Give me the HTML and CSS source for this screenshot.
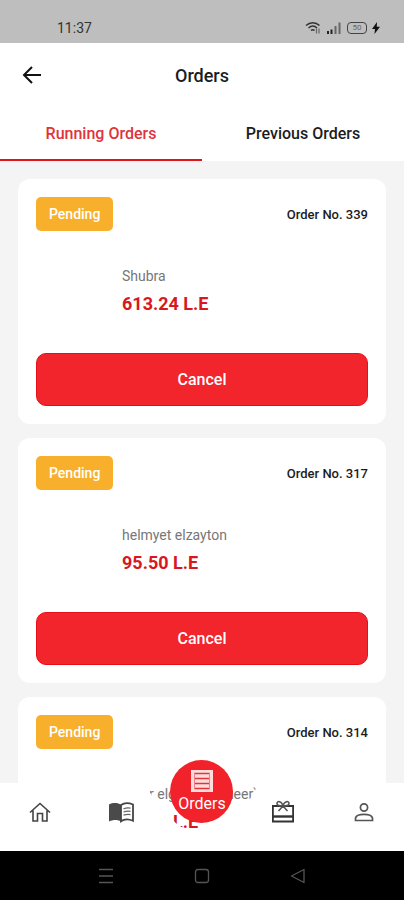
FILE: index.html
```html
<!DOCTYPE html>
<html lang="en">
  <head>
    <meta charset="UTF-8" />
    <meta name="viewport" content="width=device-width, initial-scale=1.0" />
    <title>Orders</title>
    <link rel="stylesheet" href="styles.css">
  </head>
  <body>
    <div class="status-bar">
      <span class="clock">11:37</span>
      <div class="status-icons">
        <svg width="16" height="14" viewBox="0 0 16 14" fill="none" stroke="#333" stroke-width="1.5">
          <path d="M1 4.5C5 .8 10.500 .8 14.500 4.500M3.500 7C6.200 4.600 9.500 4.600 12 7M6 9.500C7.200 8.400 8.500 8.400 9.500 9.500" />
          <path d="M11.500 7.500V12.500M14 7.500V12.500" stroke="#666" stroke-width="1.200" />
        </svg>
        <svg width="16" height="14" viewBox="0 0 16 14">
          <path d="M1 10h2v3H1zM4.500 8.500h2V13h-2z" fill="#222" />
          <path d="M8.500 5h2v8h-2zM12.500 1.500h2V13h-2z" fill="#666" />
        </svg>
        <span class="battery">50</span>
        <svg class="bolt" width="8" height="12" viewBox="0 0 8 12">
          <path d="M5 0L0 7h3L2.500 12L8 4.800H4.800z" fill="#111" />
        </svg>
      </div>
    </div>

    <header class="app-bar">
      <button class="back" type="button" aria-label="Back">
        <svg width="20" height="20" viewBox="0 0 20 20" fill="none" stroke="#111" stroke-width="2">
          <path d="M19 10H2.500M10 2L2 10l8 8" />
        </svg>
      </button>
      <h1>Orders</h1>
    </header>

    <div class="tabs" role="tablist">
      <button class="tab active" type="button" role="tab" aria-selected="true">Running Orders</button>
      <button class="tab" type="button" role="tab" aria-selected="false">Previous Orders</button>
    </div>

    <div class="content">
      <main class="orders">
        <article class="card">
          <div class="card-head">
            <span class="badge">Pending</span>
            <span class="order-no">Order No. 339</span>
          </div>
          <div class="card-body">
            <p class="place">Shubra</p>
            <p class="price">613.24 L.E</p>
          </div>
          <button class="cancel" type="button">Cancel</button>
        </article>

        <article class="card">
          <div class="card-head">
            <span class="badge">Pending</span>
            <span class="order-no">Order No. 317</span>
          </div>
          <div class="card-body">
            <p class="place">helmyet elzayton</p>
            <p class="price">95.50 L.E</p>
          </div>
          <button class="cancel" type="button">Cancel</button>
        </article>

        <article class="card">
          <div class="card-head">
            <span class="badge">Pending</span>
            <span class="order-no">Order No. 314</span>
          </div>
          <div class="card-body">
            <p class="place">Masr elgdeda (elheer)</p>
            <p class="price">76.50 L.E</p>
          </div>
        </article>
      </main>

      <nav class="bottom-nav">
        <!-- white bar with a notch for the round button -->
        <div class="nav-shape">
          <span></span>
          <svg width="120" height="68" viewBox="0 0 120 68">
            <path
              fill="#fff"
              d="M0 0C5 0 7 10 13 17C20 27 26 31 31 37C37 45 48 48 60 48C72 48 83 45 89 37C94 31 100 27 107 17C113 10 115 0 120 0V68H0z"
            />
          </svg>
          <span></span>
        </div>
        <a href="#home" aria-label="Home">
          <svg width="22" height="22" viewBox="0 0 22 22" fill="none" stroke="#444" stroke-width="1.600">
            <path d="M1 11.500L11 2.500l10 9M4 9.500V20h4.500v-7.500h5V20H18V9.500" />
          </svg>
        </a>
        <a href="#menu" aria-label="Menu">
          <svg width="26" height="22" viewBox="0 0 26 22">
            <path d="M1 3.500C5 1.500 10 1.500 13 4V20.500C10 18.500 5 18.500 1 20.500z" fill="#4a4a4a" />
            <path
              d="M13 4C16 1.800 21 1.800 25 3.500V19.800C21 18 16 18 13 20.300z"
              fill="none"
              stroke="#444"
              stroke-width="1.800"
            />
            <path d="M15.500 7.800q3.500-1.300 7-.6M15.500 11q3.500-1.300 7-.6M15.500 14.200q3.500-1.300 7-.6" fill="none" stroke="#666" stroke-width="1.300" />
          </svg>
        </a>
        <a class="current" href="#orders" aria-current="page">
          <span class="fab">
            <svg width="22" height="22" viewBox="0 0 22 22">
              <path d="M0 0h22v22H0z" fill="#fdd" />
              <path d="M3 3.500h16M3 8.500h16M3 13.500h16M3 18.500h16" stroke="#e0353b" stroke-width="1.500" />
              <path d="M3.500 3v16M18.500 3v16" stroke="#f08085" stroke-width="1" />
            </svg>
            Orders
          </span>
        </a>
        <a href="#offers" aria-label="Offers">
          <svg width="24" height="24" viewBox="0 0 24 24" fill="none" stroke="#333" stroke-width="1.800">
            <path d="M1.900 6h20.200v15.500H1.900z" />
            <path d="M2 16.500h20" stroke-width="2.400" />
            <path d="M12 5.500C10.500 1 6 .5 6 3.500C6 5.500 8 6 12 6C16 6 18 5.500 18 3.500C18 .5 13.500 1 12 5.500M12 6l-4.500 5M12 6l4.500 5" stroke="#555" stroke-width="1.600" />
          </svg>
        </a>
        <a href="#profile" aria-label="Profile">
          <svg width="20" height="20" viewBox="0 0 20 20" fill="none" stroke="#555" stroke-width="1.700">
            <circle cx="10" cy="5.500" r="3.600" />
            <path d="M1.500 18.500V16.500C1.500 13.500 6 12.300 10 12.300S18.500 13.500 18.500 16.500V18.500z" />
          </svg>
        </a>
      </nav>
    </div>

    <div class="system-nav">
      <button type="button" aria-label="Recent apps">
        <svg width="16" height="16" viewBox="0 0 16 16" stroke="#555" stroke-width="1.300">
          <path d="M1 1.500h14M1 8h14M1 14.500h14" />
        </svg>
      </button>
      <button type="button" aria-label="Home screen">
        <svg width="16" height="16" viewBox="0 0 16 16" fill="none" stroke="#555" stroke-width="1.300">
          <rect x="1.500" y="1.500" width="13" height="13" rx="2.500" />
        </svg>
      </button>
      <button type="button" aria-label="System back">
        <svg width="16" height="16" viewBox="0 0 16 16" fill="none" stroke="#555" stroke-width="1.300" stroke-linejoin="round">
          <path d="M1.500 8L14 1.500v13z" />
        </svg>
      </button>
    </div>
  </body>
</html>
```
FILE: styles.css
```css
/* Reset */
* {
  margin: 0;
  padding: 0;
  box-sizing: border-box;
}

body {
  font-family: Roboto, "Liberation Sans", sans-serif;
  height: 100vh;
  display: flex;
  flex-direction: column;
  background: #f4f4f4;
  color: #1c1c1c;
}

button {
  font: inherit;
  border: none;
  background: none;
  cursor: pointer;
}

svg {
  display: block;
}

/* Status bar */
.status-bar {
  display: flex;
  align-items: center;
  justify-content: space-between;
  padding: 13px 24px 0 57px;
  height: 43px;
  background: #bebebe;
}

.clock {
  font-size: 14px;
  color: #333;
}

.status-icons {
  display: flex;
  align-items: center;
  gap: 5px;
}

.battery {
  width: 20px;
  height: 12px;
  border: 1px solid #444;
  border-radius: 4px;
  font-size: 8px;
  line-height: 10px;
  text-align: center;
  color: #666;
}

/* App bar */
.app-bar {
  display: grid;
  grid-template-columns: 20px 1fr 20px;
  align-items: center;
  height: 64px;
  padding: 0 22px;
  background: #fff;
}

h1 {
  font-size: 18px;
  font-weight: 500;
  text-align: center;
}

/* Tabs */
.tabs {
  display: flex;
  background: #fff;
}

.tab {
  flex: 1;
  height: 54px;
  border-bottom: 2px solid transparent;
  font-size: 16px;
  font-weight: 500;
  color: #1c1c1c;
}

.tab.active {
  color: #e0333a;
  border-color: #e0151c;
}

/* Orders list */
.content {
  position: relative;
  flex: 1;
  min-height: 0;
}

.orders {
  display: flex;
  flex-direction: column;
  gap: 14px;
  height: 100%;
  padding: 18px 18px 0;
  overflow-y: auto;
  scrollbar-width: none;
}

.card {
  flex-shrink: 0;
  padding: 18px;
  background: #fff;
  border-radius: 12px;
}

.card-head {
  display: flex;
  align-items: center;
  justify-content: space-between;
}

.badge {
  padding: 0 13px;
  background: #f8b02c;
  border-radius: 5px;
  font-size: 14px;
  font-weight: 500;
  line-height: 34px;
  color: #fff;
}

.order-no {
  font-size: 13px;
  font-weight: 500;
}

.card-body {
  padding: 31px 0 35px 86px;
  line-height: 28px;
}

.place {
  font-size: 14px;
  color: #777;
}

.price {
  font-size: 18px;
  font-weight: 700;
  color: #d8171e;
}

.cancel {
  width: 100%;
  height: 53px;
  background: #f2242c;
  border: 1px solid #e60f17;
  border-radius: 10px;
  font-size: 16px;
  font-weight: 500;
  color: #fff;
}

/* Bottom navigation, lies over the list */
.bottom-nav {
  position: absolute;
  left: 0;
  right: 0;
  bottom: 0;
  z-index: 1;
  height: 68px;
  display: flex;
  align-items: center;
  padding-bottom: 10px;
}

.bottom-nav a {
  flex: 1;
  display: flex;
  justify-content: center;
  color: #fff;
  text-decoration: none;
}

.nav-shape {
  position: absolute;
  inset: 0;
  z-index: -1;
  display: flex;
}

.nav-shape span {
  flex: 1;
  background: #fff;
}

.bottom-nav .current {
  align-self: flex-start;
  margin-top: -23px;
}

.fab {
  display: flex;
  flex-direction: column;
  align-items: center;
  justify-content: center;
  gap: 2px;
  width: 63px;
  height: 63px;
  background: #f2222a;
  border-radius: 50%;
  font-size: 16px;
  line-height: 20px;
}

/* Android buttons */
.system-nav {
  display: flex;
  justify-content: center;
  gap: 80px;
  height: 49px;
  background: #000;
}
```
